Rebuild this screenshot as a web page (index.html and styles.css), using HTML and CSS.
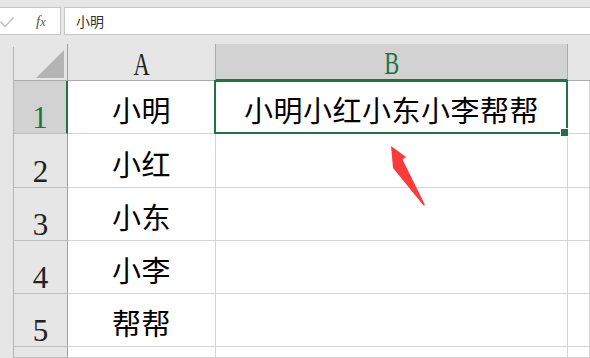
FILE: index.html
```html
<!DOCTYPE html>
<html lang="zh-CN">
<head>
  <meta charset="UTF-8">
  <title>Sheet</title>
  <link rel="stylesheet" href="styles.css">
</head>
<body>

  <div class="formula-bar">
    <div class="fx-box">
      <svg class="check" width="14" height="12" viewBox="0 0 14 12">
        <polyline points="0.5,4.5 5,9.5 13.5,0.5" fill="none" stroke="#c4c4c4" stroke-width="1.6"/>
      </svg>
      <span class="fx">f<span class="fx-x">x</span></span>
    </div>
    <div class="formula-input">小明</div>
  </div>

  <div class="sheet">
    <div class="strip"></div>

    <div class="corner"><span class="corner-tri"></span></div>
    <div class="col-head"><span>A</span></div>
    <div class="col-head selected"><span>B</span></div>
    <div class="col-head last"></div>

    <div class="row-head selected">1</div>
    <div class="cell">小明</div>
    <div class="cell active">小明小红小东小李帮帮</div>
    <div class="cell"></div>

    <div class="row-head">2</div>
    <div class="cell">小红</div>
    <div class="cell"></div>
    <div class="cell"></div>

    <div class="row-head">3</div>
    <div class="cell">小东</div>
    <div class="cell"></div>
    <div class="cell"></div>

    <div class="row-head">4</div>
    <div class="cell">小李</div>
    <div class="cell"></div>
    <div class="cell"></div>

    <div class="row-head">5</div>
    <div class="cell">帮帮</div>
    <div class="cell"></div>
    <div class="cell"></div>

    <div class="row-head"></div>
    <div class="cell"></div>
    <div class="cell"></div>
    <div class="cell"></div>
  </div>

  <!-- red pointer drawn over the sheet -->
  <svg class="pointer" width="45" height="70" viewBox="0 0 45 70">
    <polygon points="6,6 21,17 17.5,19.5 40,65 38.5,65.5 8,28" fill="#fb3b3b"/>
  </svg>

</body>
</html>
```

FILE: styles.css
```css
* {
  box-sizing: border-box;
}

body {
  margin: 0;
  width: 590px;
  height: 358px;
  overflow: hidden;
  position: relative;
  background: #e6e6e6;
  font-family: "Liberation Serif", serif;
}

/* formula bar */
.formula-bar {
  display: flex;
  gap: 3px;
  height: 35px;
  padding-top: 7px;
}

.fx-box {
  width: 61px;
  background: #fff;
  border: 1px solid #c6c6c6;
  border-left: none;
  display: flex;
  align-items: center;
}

.check {
  margin-top: 3px;
}

.fx {
  margin-left: 22px;
  font-family: "Liberation Serif", serif;
  font-style: italic;
  font-size: 15px;
  color: #555;
}

.fx-x {
  font-size: 12px;
}

.formula-input {
  flex: 1;
  background: #fff;
  border: 1px solid #c6c6c6;
  border-right: none;
  padding-left: 11px;
  display: flex;
  align-items: center;
  font-family: "Noto Sans CJK SC", sans-serif;
  font-size: 14px;
  color: #333;
}

/* sheet grid */
.sheet {
  margin-top: 9px;
  display: grid;
  grid-template-columns: 14px 54px 148px 352px 1fr;
  grid-template-rows: 37px 53px 54px 53px 53px 53px 11px;
}

.strip {
  grid-column: 1;
  grid-row: 1 / -1;
  margin-top: 3px;
  border-right: 1px solid #b4b4b4;
}

.corner {
  border-right: 1px solid #9e9e9e;
  border-bottom: 1px solid #ababab;
  display: flex;
  align-items: flex-end;
  justify-content: flex-end;
  padding: 0 3px 2px 0;
}

.corner-tri {
  width: 28px;
  height: 28px;
  background: #b4b4b4;
  clip-path: polygon(100% 0, 100% 100%, 0 100%);
}

.col-head {
  background: #e6e6e6;
  border-right: 1px solid #ababab;
  border-bottom: 1px solid #ababab;
  display: flex;
  align-items: flex-end;
  justify-content: center;
  color: #222;
}

.col-head span {
  display: inline-block;
  font-size: 32px;
  line-height: 32px;
  transform: scaleX(0.7);
}

.col-head.selected {
  background: #d2d2d2;
  border-bottom: 2px solid #217346;
  color: #217346;
}

.col-head.last {
  border-right: none;
}

.row-head {
  background: #e6e6e6;
  border-right: 1px solid #9e9e9e;
  border-bottom: 1px solid #c0c0c0;
  display: flex;
  align-items: flex-end;
  justify-content: center;
  font-size: 31px;
  line-height: 31px;
  color: #222;
}

.row-head.selected {
  background: #d2d2d2;
  border-right: 2px solid #217346;
  color: #217346;
}

.cell {
  background: #fff;
  border-right: 1px solid #d4d4d4;
  border-bottom: 1px solid #d4d4d4;
  display: flex;
  align-items: flex-end;
  justify-content: center;
  padding-bottom: 9px;
  font-family: "Noto Sans CJK SC", sans-serif;
  font-size: 29px;
  line-height: 29px;
  letter-spacing: 0.5px;
  color: #000;
  white-space: nowrap;
  overflow: hidden;
}

.cell.active {
  position: relative;
  overflow: visible;
}

.cell.active::before {
  content: "";
  position: absolute;
  left: -2px;
  top: -1px;
  right: -1px;
  bottom: -1px;
  border: 2px solid #217346;
}

.cell.active::after {
  content: "";
  position: absolute;
  right: -2px;
  bottom: -4px;
  width: 7px;
  height: 7px;
  background: #217346;
  border: 1px solid #fff;
}

.pointer {
  position: absolute;
  left: 385px;
  top: 140px;
}
```
